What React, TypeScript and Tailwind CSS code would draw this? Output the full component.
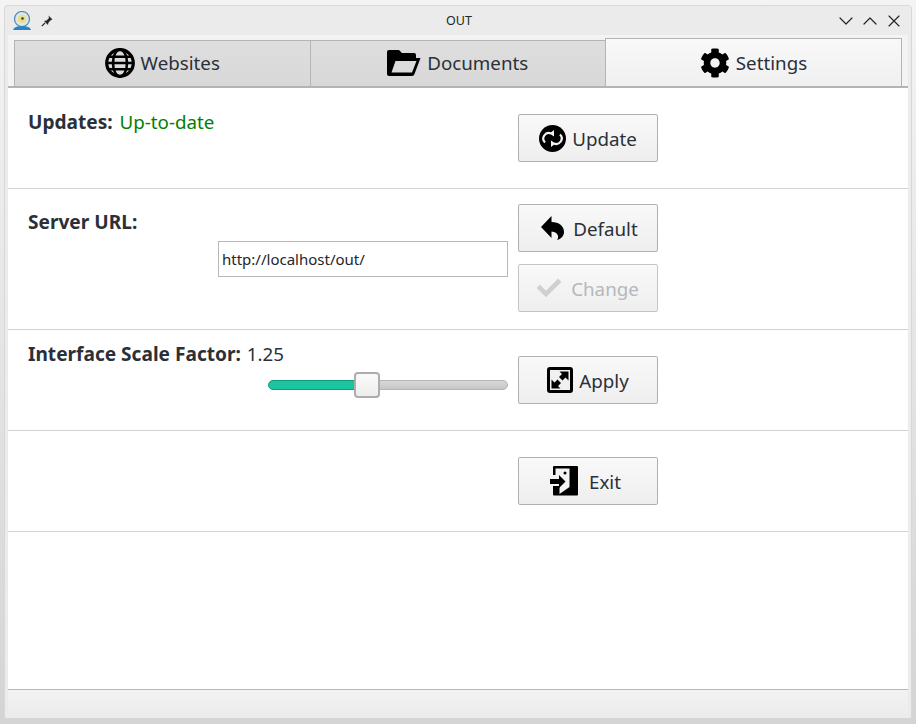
import type { ReactNode } from "react";
import { FaCheck, FaCog } from "react-icons/fa";
import { ChevronDown, ChevronUp, X } from "lucide-react";

function GlobeIcon() {
  return (
    <svg viewBox="0 0 30 30" className="w-[30px] h-[30px]">
      <circle cx="15" cy="15" r="13.300" fill="#dcdcdc" stroke="#000" strokeWidth="3.200" />
      <g fill="none" stroke="#000" strokeWidth="2.600">
        <ellipse cx="15" cy="15" rx="7" ry="13.500" />
        <path d="M2 15h26M3.500 8.800h23M3.500 21.200h23" />
      </g>
    </svg>
  );
}

function FolderIcon() {
  return (
    <svg viewBox="0 0 34 26" className="w-[34px] h-[26px]">
      <path
        fill="#000"
        d="M2 0h10l3 3h12a2 2 0 0 1 2 2v3h4.500l-6 16a3 3 0 0 1-2.500 2H2a2 2 0 0 1-2-2V2a2 2 0 0 1 2-2z"
      />
      <path fill="#dcdcdc" d="M8.500 11h21l-4.500 11.500H4.500z" />
    </svg>
  );
}

function UpdateIcon() {
  return (
    <svg viewBox="0 0 27 27" className="w-[27px] h-[27px]">
      <circle cx="13.500" cy="13.500" r="13.500" fill="#000" />
      <g fill="none" stroke="#f2f2f2" strokeWidth="2.200">
        <path d="M6 17.500a5.500 5.500 0 0 1 6-9" />
        <path d="M21 9.500a5.500 5.500 0 0 1-6 9" />
      </g>
      <path fill="#f2f2f2" d="M15 5v6.500l-4.500-3zM12 22v-6.500l4.500 3z" />
    </svg>
  );
}

function BackIcon() {
  return (
    <svg viewBox="0 0 23 24" className="w-[23px] h-[24px]">
      <path
        fill="#000"
        d="M0 11L10.500 0V6C18 6 23 10 23 16C23 20 20 23 16 24C18 22 18 16 10.500 15.500V22Z"
      />
    </svg>
  );
}

function ResizeIcon() {
  return (
    <svg viewBox="0 0 26 26" className="w-[26px] h-[26px]">
      <rect x="0" y="0" width="26" height="26" rx="3" fill="#000" />
      <rect x="3" y="3" width="20" height="20" fill="#f0f0f0" />
      <path
        fill="#000"
        d="M12.500 4.500h9v9l-3-3-3 3-3.500-3.500 3-3zM13.500 21.500h-9v-9l3 3 3-3 3.500 3.500-3 3z"
      />
    </svg>
  );
}

function ExitIcon() {
  return (
    <svg viewBox="0 0 28 30" className="w-[28px] h-[30px]">
      <rect x="3" y="0" width="25" height="29.500" rx="1" fill="#000" />
      <path fill="#f3f3f3" d="M5.500 2.500H19.500V21L9.500 28V20H3V9H5.500z" />
      <circle cx="15" cy="7" r="1.500" fill="#000" />
      <path fill="#000" d="M0 13H9V9L15.500 15.500L9 22V18H0z" />
    </svg>
  );
}

function WindowIcon() {
  return (
    <svg viewBox="0 0 20 20" className="w-5 h-5">
      <circle cx="10" cy="8" r="7.500" fill="#dfe6dc" stroke="#4f86b8" strokeWidth="1.200" />
      <circle cx="10" cy="8" r="4" fill="#e8dd8f" />
      <circle cx="10.500" cy="7.500" r="1.300" fill="#3b3b3b" />
      <path d="M1 19c1-3 4-4 9-4s8 1 9 4z" fill="#2b84c6" />
    </svg>
  );
}

function PinIcon() {
  return (
    <svg viewBox="0 0 12 12" className="w-3 h-3">
      <path fill="#232629" d="M7.500 0.500l4 4-1.500.5-2.500 2.500-.5 2.500-4-4 2.500-.5L8 3z" />
      <path stroke="#232629" strokeWidth="1.200" d="M4 8L0.800 11.200" />
    </svg>
  );
}

function Tab({ icon, label, active }: { icon: ReactNode; label: string; active?: boolean }) {
  if (active) {
    return (
      <div className="w-[297px] h-[48px] flex items-center justify-center gap-[6px] border border-b-0 border-[#b4b4b4] bg-gradient-to-b from-[#f9f9f9] to-[#f0f0f0]">
        {icon}
        <span>{label}</span>
      </div>
    );
  }
  return (
    <div className="flex-1 h-[46px] pb-[2px] flex items-center justify-center gap-[6px] border border-b-0 border-r-0 border-[#b4b4b4] bg-gradient-to-b from-[#dedede] to-[#d8d8d8]">
      {icon}
      <span>{label}</span>
    </div>
  );
}

function Btn({ icon, label, disabled, gap }: { icon: ReactNode; label: string; disabled?: boolean; gap: string }) {
  return (
    <button
      className={`w-[140px] h-[48px] flex items-center justify-center rounded-[2px] border border-[#b0b0b0] bg-gradient-to-b from-[#f9f9f9] to-[#eeeeee] ${gap} ${
        disabled ? "text-[#b4b8bc] border-[#c4c4c4]" : ""
      }`}
    >
      {icon}
      <span>{label}</span>
    </button>
  );
}

export default function App() {
  return (
    <div
      className="w-[916px] h-[724px] overflow-hidden pl-[4px] pr-[4px] pt-[5px] pb-[5px] bg-gradient-to-b from-[#f4f4f4] to-[#d4d4d4] text-[18.75px] leading-[27px] text-[#2b3038]"
      style={{ fontFamily: '"Noto Sans", sans-serif' }}
    >
      <div className="h-full flex flex-col rounded-t-[4px] rounded-b-[2px] bg-[#ebebeb] border border-[#d8d8d8]">
        {/* title bar */}
        <div className="h-[29px] shrink-0 flex items-center pl-[7px] pr-[5px] text-[12.5px] leading-4 text-[#232629]">
          <div className="flex-1 flex items-center">
            <WindowIcon />
            <span className="ml-[9px]">
              <PinIcon />
            </span>
          </div>
          <span>OUT</span>
          <div className="flex-1 flex items-center justify-end">
            <ChevronDown size={24} strokeWidth={1.2} />
            <ChevronUp size={24} strokeWidth={1.2} />
            <div className="w-6 h-6 flex items-center justify-center">
              <X size={20} strokeWidth={1.4} />
            </div>
          </div>
        </div>

        {/* tabs */}
        <div className="mx-[3px] shrink-0 h-[53px] flex items-end px-[6px] bg-[#f3f3f3] border-b-2 border-[#b4b4b4]">
          <Tab icon={<GlobeIcon />} label="Websites" />
          <Tab icon={<FolderIcon />} label="Documents" />
          <Tab icon={<FaCog size={30} color="#000" />} label="Settings" active />
        </div>

        <div className="mx-[3px] flex-1 bg-white flex flex-col">
          <div className="h-[101px] shrink-0 flex border-b border-[#d2d2d2] pl-[20px] pt-[20px]">
            <div className="w-[490px]">
              <b className="font-bold text-[19.1px] mr-[2px]">Updates:</b> <span className="text-[#008000]">Up-to-date</span>
            </div>
            <div className="mt-[6px]">
              <Btn icon={<UpdateIcon />} label="Update" gap="gap-[6px]" />
            </div>
          </div>

          <div className="h-[141px] shrink-0 flex border-b border-[#d2d2d2] pl-[20px] pt-[20px]">
            <div className="w-[490px] pr-[10px] flex flex-col items-start">
              <b className="font-bold text-[19.1px]">Server URL:</b>
              <input
                readOnly
                value="http://localhost/out/"
                className="self-end mt-[5px] w-[290px] h-[36px] px-[3px] border border-[#b8b8b8] bg-white text-[15px] text-[#232629] outline-none"
              />
            </div>
            <div className="-mt-[5px] flex flex-col gap-[12px]">
              <Btn icon={<BackIcon />} label="Default" gap="gap-[9px] pl-[3px]" />
              <Btn icon={<FaCheck size={24} color="#d0d0d0" />} label="Change" disabled gap="gap-[10px]" />
            </div>
          </div>

          <div className="h-[101px] shrink-0 flex border-b border-[#d2d2d2] pl-[20px] pt-[10px]">
            <div className="w-[490px] pr-[10px] flex flex-col">
              <div>
                <b className="font-bold text-[19.1px] mr-[1px]">Interface Scale Factor:</b> 1.25
              </div>
              <div className="self-end w-[240px] h-[26px] mt-[4px] flex items-center">
                <div className="w-[87px] h-[10px] rounded-l-[5px] border border-[#149a7e] bg-[#1bc5a0]" />
                <div className="w-[26px] h-[26px] -mx-px relative rounded-[4px] border-2 border-[#adadad] bg-gradient-to-b from-[#fafafa] to-[#eeeeee]" />
                <div className="flex-1 h-[10px] rounded-r-[5px] border border-[#b4b4b4] bg-gradient-to-b from-[#d8d8d8] to-[#c6c6c6]" />
              </div>
            </div>
            <div className="mt-[16px]">
              <Btn icon={<ResizeIcon />} label="Apply" gap="gap-[6px]" />
            </div>
          </div>

          <div className="h-[101px] shrink-0 flex justify-start border-b border-[#d2d2d2] pl-[510px] pt-[26px]">
            <Btn icon={<ExitIcon />} label="Exit" gap="gap-[11px] pr-[5px]" />
          </div>
          <div className="flex-1" />
        </div>

        {/* status bar */}
        <div className="mx-[3px] h-[29px] shrink-0 border-t border-[#b8b8b8] bg-gradient-to-b from-[#f3f3f3] to-[#ebebeb]" />
      </div>
    </div>
  );
}
